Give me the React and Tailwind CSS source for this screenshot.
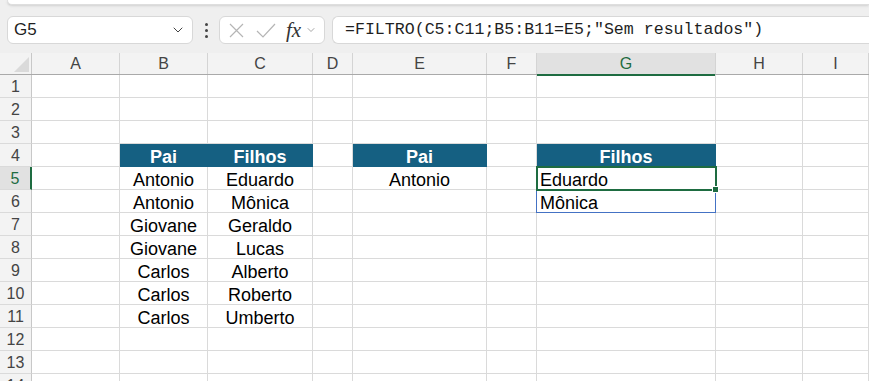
import { ChevronDown } from "lucide-react";

const COLS = [
    { key: "A", w: "w-[88px]" },
    { key: "B", w: "w-[88px]" },
    { key: "C", w: "w-[105px]" },
    { key: "D", w: "w-[40px]" },
    { key: "E", w: "w-[134px]" },
    { key: "F", w: "w-[50px]" },
    { key: "G", w: "w-[179px]" },
    { key: "H", w: "w-[87px]" },
    { key: "I", w: "flex-1" },
];

const HEAD = "head";

const DATA = {
    4: { B: [HEAD, "Pai"], C: [HEAD, "Filhos"], E: [HEAD, "Pai"], G: [HEAD, "Filhos"] },
    5: { B: "Antonio", C: "Eduardo", E: "Antonio", G: "Eduardo" },
    6: { B: "Antonio", C: "Mônica", G: "Mônica" },
    7: { B: "Giovane", C: "Geraldo" },
    8: { B: "Giovane", C: "Lucas" },
    9: { B: "Carlos", C: "Alberto" },
    10: { B: "Carlos", C: "Roberto" },
    11: { B: "Carlos", C: "Umberto" },
};

const ROWS = [1, 2, 3, 4, 5, 6, 7, 8, 9, 10, 11, 12, 13, 14];

const Cell = ({ col, row }) => {
    const value = DATA[row] && DATA[row][col.key];

    if (Array.isArray(value)) {
        return (
            <div
                className={`${col.w} shrink-0 h-full flex items-end justify-center bg-[#156082] border-b border-r border-[#156082] text-white font-bold text-[18px] leading-[18px]`}
            >
                {value[1]}
            </div>
        );
    }

    // spilled result in column G
    if (col.key === "G" && (row === 5 || row === 6)) {
        return (
            <div
                className={`${col.w} shrink-0 h-full relative flex items-end pl-[3px] border-b border-r border-[#dadada] text-black text-[18px] leading-[18px]`}
            >
                {value}
                {row === 5 && (
                    <>
                        <div className="absolute z-10 left-[-1px] top-[-1px] w-[180px] h-[47px] border border-[#4472c4] pointer-events-none" />
                        <div className="absolute z-20 left-[-1px] top-[-1px] w-[181px] h-[25px] border-2 border-[#1e6c41] pointer-events-none" />
                        <div className="absolute z-30 right-[-4px] bottom-[-4px] w-[7px] h-[7px] bg-[#1e6c41] border border-white" />
                    </>
                )}
            </div>
        );
    }

    return (
        <div
            className={`${col.w} shrink-0 h-full flex items-end justify-center border-b border-r border-[#dadada] text-black text-[18px] leading-[18px]`}
        >
            {value}
        </div>
    );
};

const Toolbar = () => (
    <div className="h-[53px] bg-[#efefef] flex flex-col">
        <div className="h-[5px] ml-[7px] bg-white rounded-bl-lg border-b border-l border-[#dedede] shadow-sm" />
        <div className="mt-[11px] h-[28px] flex items-stretch">
            <div className="ml-[7px] w-[186px] flex items-center justify-between bg-white border border-[#d8d8d8] rounded-md pl-[6px] pr-[6px]">
                <span className="text-[17px] text-[#1f1f1f]">G5</span>
                <ChevronDown size={16} strokeWidth={1.5} className="text-[#444]" />
            </div>
            <div className="w-[26px] flex flex-col items-center justify-center gap-[3px]">
                <span className="w-[3px] h-[3px] bg-[#444] rounded-full" />
                <span className="w-[3px] h-[3px] bg-[#444] rounded-full" />
                <span className="w-[3px] h-[3px] bg-[#444] rounded-full" />
            </div>
            <div className="w-[106px] flex items-center bg-white border border-[#d8d8d8] rounded-md pl-[8px]">
                <svg width="17" height="17" viewBox="0 0 17 17" className="text-[#b5b5b5]">
                    <path d="M2 2 L15 15 M15 2 L2 15" stroke="currentColor" strokeWidth="1.2" fill="none" />
                </svg>
                <svg width="20" height="17" viewBox="0 0 20 17" className="ml-[11px] text-[#b5b5b5]">
                    <path d="M1 9 L7 15 L19 2" stroke="currentColor" strokeWidth="1.2" fill="none" />
                </svg>
                <span className="ml-[10px] text-[21px] leading-none italic text-[#333] [font-family:'Liberation_Serif',serif]">
                    fx
                </span>
                <ChevronDown size={12} strokeWidth={1.5} className="ml-[4px] text-[#888]" />
            </div>
            <div className="ml-[7px] flex-1 flex items-center bg-white border border-r-0 border-[#d8d8d8] rounded-l-md pl-[12px]">
                <span className="text-[16.6px] text-[#1f1f1f] [font-family:'Liberation_Mono',monospace]">
                    =FILTRO(C5:C11;B5:B11=E5;"Sem resultados")
                </span>
            </div>
        </div>
    </div>
);

const App = () => {
    return (
        <div className="w-[869px] h-[381px] overflow-hidden bg-white [font-family:'Liberation_Sans',Arial,sans-serif]">
            <Toolbar />

            <div className="h-[22px] flex bg-[#f3f3f3] border-b border-[#a9a9a9]">
                <div className="w-[32px] shrink-0 h-full relative border-r border-[#c8c8c8]">
                    <svg width="16" height="16" viewBox="0 0 16 16" className="absolute left-[14px] top-[4px]">
                        <polygon points="15,0 15,15 0,15" fill="#dadada" />
                    </svg>
                </div>
                {COLS.map((col) =>
                    col.key === "G" ? (
                        <div
                            key={col.key}
                            className={`${col.w} shrink-0 h-[23px] flex items-center justify-center bg-[#e1e1e1] border-r border-[#d4d4d4] border-b-2 border-b-[#1e6c41] text-[#1e6c41] text-[16px]`}
                        >
                            {col.key}
                        </div>
                    ) : (
                        <div
                            key={col.key}
                            className={`${col.w} shrink-0 h-full flex items-center justify-center border-r border-[#d4d4d4] text-[#444] text-[16px]`}
                        >
                            {col.key}
                        </div>
                    )
                )}
            </div>

            {ROWS.map((row) => (
                <div key={row} className="h-[23px] flex">
                    {row === 5 ? (
                        <div className="w-[32px] shrink-0 h-full flex items-center justify-center pt-[1px] bg-[#e1e1e1] border-b border-[#dadada] border-r-2 border-r-[#1e6c41] text-[#1e6c41] text-[16px]">
                            {row}
                        </div>
                    ) : (
                        <div className="w-[32px] shrink-0 h-full flex items-center justify-center pt-[1px] bg-[#f3f3f3] border-b border-[#dadada] border-r border-r-[#c8c8c8] text-[#444] text-[16px]">
                            {row}
                        </div>
                    )}
                    {COLS.map((col) => (
                        <Cell key={col.key} col={col} row={row} />
                    ))}
                </div>
            ))}
        </div>
    );
};

export default App;
